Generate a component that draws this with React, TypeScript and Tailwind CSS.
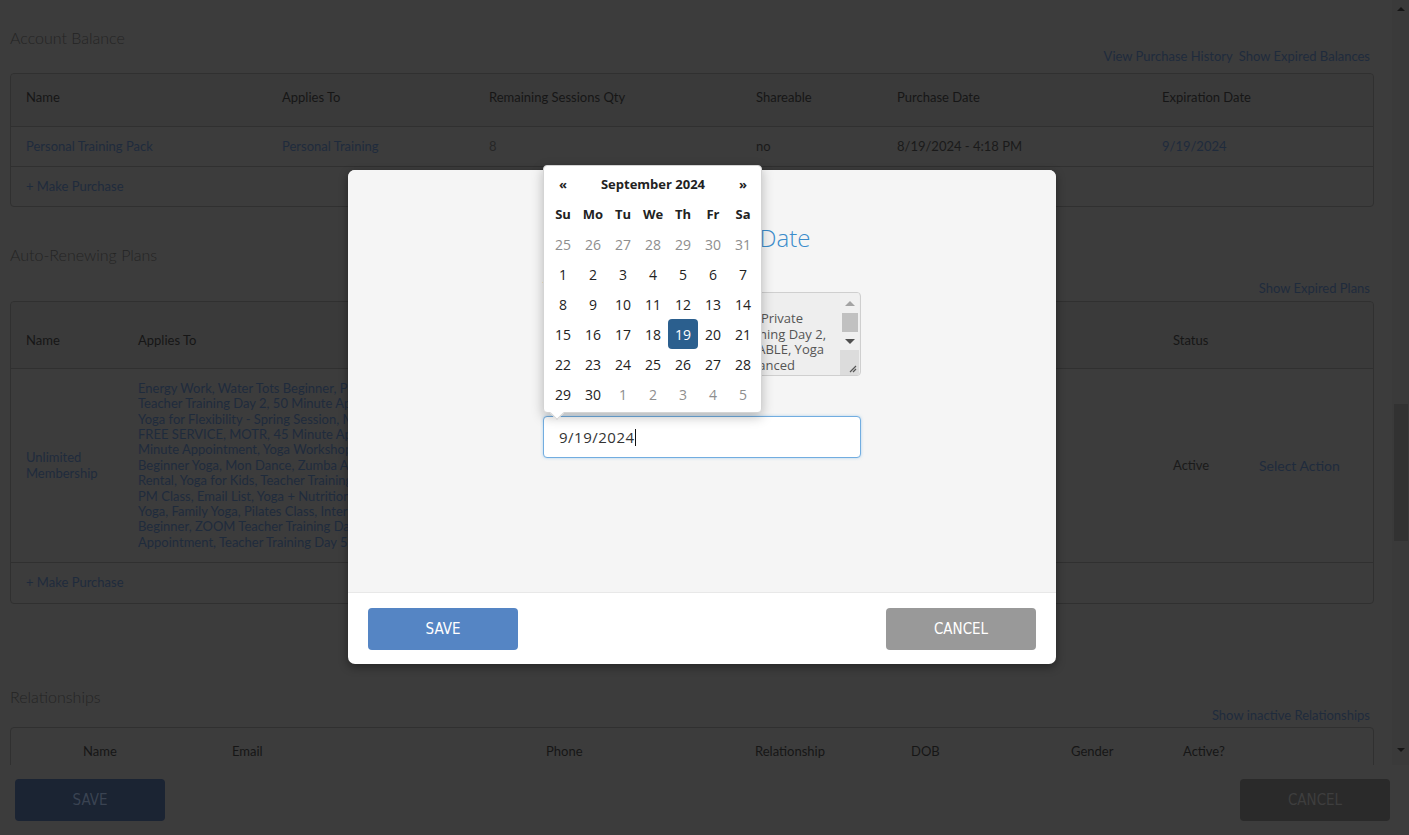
import React from "react";

const link = "text-[#1f2b3c]";
const hdr = "text-[#161616]";

function Scrollbar() {
  return (
    <div className="w-[17px] h-full bg-[#3a3a3a] flex flex-col items-center">
      <div className="h-[17px] flex items-center justify-center">
        <div className="w-0 h-0 border-l-[4px] border-r-[4px] border-b-[4px] border-l-transparent border-r-transparent border-b-[#161616]" />
      </div>
      <div className="h-[387px]" />
      <div className="w-[14px] h-[137px] bg-[#323232]" />
      <div className="flex-1" />
      <div className="h-[30px] flex items-center justify-center">
        <div className="w-0 h-0 border-l-[4px] border-r-[4px] border-t-[4px] border-l-transparent border-r-transparent border-t-[#161616]" />
      </div>
    </div>
  );
}

const appliesLines = [
  "Energy Work, Water Tots Beginner, Pilates Private Session, Yoga",
  "Teacher Training Day 2, 50 Minute Appointment, Kids Dance,",
  "Yoga for Flexibility - Spring Session, Massage 60 Minute,",
  "FREE SERVICE, MOTR, 45 Minute Appointment, Hot Yoga, 30",
  "Minute Appointment, Yoga Workshop, Teacher Training Day 1,",
  "Beginner Yoga, Mon Dance, Zumba Advanced, Studio",
  "Rental, Yoga for Kids, Teacher Training Day 3, Tuesday 6",
  "PM Class, Email List, Yoga + Nutrition, Restorative",
  "Yoga, Family Yoga, Pilates Class, Intermediate Yoga, Swim",
  "Beginner, ZOOM Teacher Training Day 4, 15 Minute",
  "Appointment, Teacher Training Day 5",
];

function Background() {
  return (
    <div className="flex-1 pl-[10px] pr-[18px] pt-[28px] overflow-hidden text-[13px]">
      {/* Account Balance */}
      <div className="h-[20px] leading-[20px] text-[16px] font-light text-[#242424]">Account Balance</div>
      <div className={`h-[16px] leading-[16px] text-right pr-[4px] ${link}`}>
        <span>View Purchase History</span>
        <span className="ml-[6px]">Show Expired Balances</span>
      </div>
      <div className="mt-[9px] border border-[#303030] rounded-[4px]">
        <div className={`h-[52px] pl-[15px] pb-[5px] grid grid-cols-[256px_207px_267px_141px_265px_1fr] items-center bg-[#3a3a3a] rounded-t-[4px] ${hdr}`}>
          <span>Name</span>
          <span>Applies To</span>
          <span>Remaining Sessions Qty</span>
          <span>Shareable</span>
          <span>Purchase Date</span>
          <span>Expiration Date</span>
        </div>
        <div className="h-[40px] border-t border-[#303030] pl-[15px] grid grid-cols-[256px_207px_267px_141px_265px_1fr] items-center">
          <span className={link}>Personal Training Pack</span>
          <span className={link}>Personal Training</span>
          <span className="text-[#262626]">8</span>
          <span className="text-[#1a1a1a]">no</span>
          <span className="text-[#1a1a1a]">8/19/2024 - 4:18 PM</span>
          <span className={link}>9/19/2024</span>
        </div>
        <div className={`h-[40px] border-t border-[#303030] pl-[15px] flex items-center ${link}`}>+ Make Purchase</div>
      </div>

      {/* Auto-Renewing Plans */}
      <div className="mt-[38px] h-[20px] leading-[20px] text-[16px] font-light text-[#242424]">Auto-Renewing Plans</div>
      <div className={`mt-[15px] h-[16px] leading-[16px] text-right pr-[4px] ${link}`}>Show Expired Plans</div>
      <div className="mt-[5px] border border-[#303030] rounded-[4px]">
        <div className={`h-[66px] pl-[15px] pt-[28px] leading-[20px] grid grid-cols-[112px_1035px_86px_1fr] bg-[#3a3a3a] rounded-t-[4px] ${hdr}`}>
          <span>Name</span>
          <span>Applies To</span>
          <span>Status</span>
          <span></span>
        </div>
        <div className="h-[194px] border-t border-[#303030] pl-[15px] grid grid-cols-[112px_1035px_86px_1fr] items-center">
          <div className={`${link} leading-[16px] -mt-[1px]`}>Unlimited<br />Membership</div>
          <div className={`${link} leading-[15.4px] whitespace-nowrap overflow-hidden w-[420px]`}>
            {appliesLines.map((l) => (
              <div key={l}>{l}</div>
            ))}
          </div>
          <span className="text-[#1a1a1a]">Active</span>
          <span className={`${link} text-[14px]`}>Select Action</span>
        </div>
        <div className={`h-[41px] border-t border-[#303030] pl-[15px] flex items-center ${link}`}>+ Make Purchase</div>
      </div>

      {/* Relationships */}
      <div className="mt-[83px] h-[20px] leading-[20px] text-[16px] font-light text-[#242424]">Relationships</div>
      <div className={`h-[16px] leading-[16px] text-right pr-[4px] ${link}`}>Show inactive Relationships</div>
      <div className="mt-[4px] border border-[#303030] rounded-[4px] h-[80px]">
        <div className={`pt-[13px] leading-[20px] grid grid-cols-[221px_314px_209px_156px_160px_112px_1fr] ${hdr}`}>
          <span className="pl-[72px]">Name</span>
          <span>Email</span>
          <span>Phone</span>
          <span>Relationship</span>
          <span>DOB</span>
          <span>Gender</span>
          <span>Active?</span>
        </div>
      </div>
    </div>
  );
}

const btnFont = "font-['DejaVu_Sans',sans-serif] [font-stretch:condensed] text-[15px] uppercase";

function Calendar() {
  const rows = [
    [25, 26, 27, 28, 29, 30, 31],
    [1, 2, 3, 4, 5, 6, 7],
    [8, 9, 10, 11, 12, 13, 14],
    [15, 16, 17, 18, 19, 20, 21],
    [22, 23, 24, 25, 26, 27, 28],
    [29, 30, 1, 2, 3, 4, 5],
  ];
  return (
    <div className="absolute left-0 bottom-[45px] w-[219px] bg-white border border-[#d4d4d4] rounded-[4px] p-[3px] pl-[4px] shadow-[0_4px_12px_rgba(0,0,0,0.25)] font-['Open_Sans',sans-serif] text-[#222]">
      <div className="grid grid-cols-[30px_150px_30px] h-[30px] pt-[1px] items-center text-center text-[13px] font-bold">
        <span>«</span>
        <span>September 2024</span>
        <span>»</span>
      </div>
      <div className="grid grid-cols-[repeat(7,30px)] h-[30px] pt-[1px] items-center text-center text-[13px] font-bold">
        {["Su", "Mo", "Tu", "We", "Th", "Fr", "Sa"].map((d) => (
          <span key={d}>{d}</span>
        ))}
      </div>
      {rows.map((r, ri) => (
        <div key={ri} className="grid grid-cols-[repeat(7,30px)] h-[30px] text-center text-[14px]">
          {r.map((d, di) => {
            const muted = (ri === 0) || (ri === 5 && di >= 2);
            const sel = ri === 3 && d === 19;
            return (
              <span
                key={di}
                className={`flex items-center justify-center rounded-[4px] ${sel ? "bg-[#2b5f8e] text-white" : muted ? "text-[#8e8e8e]" : "text-[#222]"}`}
              >
                {d}
              </span>
            );
          })}
        </div>
      ))}
      <div className="absolute left-[8px] -bottom-[6px] w-[10px] h-[10px] rotate-45 bg-white border-r border-b border-[#d4d4d4]" />
    </div>
  );
}

function Modal() {
  const taLines: [string, string][] = [
    ["Massage Session, 1 Hour Private", "pr-[37px]"],
    ["Session, Teacher Training Day 2,", "pr-[14px]"],
    ["Drop-In, NOT BOOKABLE, Yoga", "pr-[16px]"],
    ["Intro to Advanced", "pr-[45px]"],
  ];
  return (
    <div className="absolute left-[348px] top-[170px] w-[708px] h-[494px] bg-white rounded-[7px] flex flex-col shadow-[0_3px_10px_rgba(0,0,0,0.4)]">
      <div className="h-[422px] bg-[#f5f5f5] rounded-t-[7px] flex flex-col items-center pt-[52px] font-['Open_Sans',sans-serif]">
        <div className="h-[32px] leading-[32px] text-[24px] font-light text-[#3b8ccb] pl-[4px]">Edit Expiration Date</div>
        <div className="w-[318px] mt-[16px] h-[16px] leading-[16px] text-[13px] font-bold text-[#333]">Applies To</div>
        <div className="w-[318px] mt-[6px] h-[84px] border border-[#cfcfcf] rounded-[4px] bg-[#eeeeee] flex overflow-hidden">
          <div className="flex-1 pt-[18px] text-[13px] leading-[15.5px] text-[#555] overflow-hidden">
            {taLines.map(([t, p]) => (
              <div key={t} className={`text-right whitespace-nowrap ${p}`}>{t}</div>
            ))}
          </div>
          <div className="w-[19px] flex flex-col items-center bg-[#f0f0f0] mr-[1px]">
            <div className="h-[20px] flex items-center justify-center">
              <div className="w-0 h-0 border-l-[5px] border-r-[5px] border-b-[5px] border-l-transparent border-r-transparent border-b-[#a3a3a3]" />
            </div>
            <div className="w-[16px] h-[19px] bg-[#c1c1c1]" />
            <div className="h-[18px] flex items-center justify-center">
              <div className="w-0 h-0 border-l-[5px] border-r-[5px] border-t-[5px] border-l-transparent border-r-transparent border-t-[#505050]" />
            </div>
            <div className="flex-1 w-full bg-[#dcdcdc] flex items-end justify-end pr-[2px] pb-[2px]">
              <svg width="9" height="9" viewBox="0 0 9 9">
                <path d="M8 2 L2 8 M8 5 L5 8" stroke="#555" strokeWidth="1.2" />
              </svg>
            </div>
          </div>
        </div>
        <div className="w-[318px] mt-[14px] h-[16px] leading-[16px] text-[13px] font-bold text-[#333]">Expiration Date</div>
        <div className="relative w-[318px] mt-[10px]">
          <div className="h-[42px] border border-[#72ade0] rounded-[4px] bg-white flex items-center pl-[15px] text-[15px] tracking-[0.5px] text-[#333] shadow-[0_0_3px_rgba(102,175,233,0.5)]">
            <span>9/19/2024</span>
            <span className="w-px h-[17px] bg-[#111]" />
          </div>
          <Calendar />
        </div>
      </div>
      <div className="flex-1 border-t border-[#e8e8e8] flex items-start justify-between px-[20px] pt-[15px]">
        <div className={`w-[150px] h-[42px] rounded-[4px] bg-[#5585c4] text-white flex items-center justify-center ${btnFont}`}>Save</div>
        <div className={`w-[150px] h-[42px] rounded-[4px] bg-[#999999] text-white flex items-center justify-center ${btnFont}`}>Cancel</div>
      </div>
    </div>
  );
}

export default function App() {
  return (
    <div className="relative w-[1409px] h-[835px] overflow-hidden bg-[#3c3c3c] font-['Lato',sans-serif]">
      <div className="flex h-[765px]">
        <Background />
        <Scrollbar />
      </div>
      <div className="h-[70px] flex items-center justify-between pl-[15px] pr-[19px] bg-[#3c3c3c]">
        <div className={`w-[150px] h-[42px] rounded-[4px] bg-[#1b2433] text-[#3a4352] flex items-center justify-center ${btnFont}`}>Save</div>
        <div className={`w-[150px] h-[42px] rounded-[4px] bg-[#2a2a2a] text-[#3e3e3e] flex items-center justify-center ${btnFont}`}>Cancel</div>
      </div>
      <Modal />
    </div>
  );
}
